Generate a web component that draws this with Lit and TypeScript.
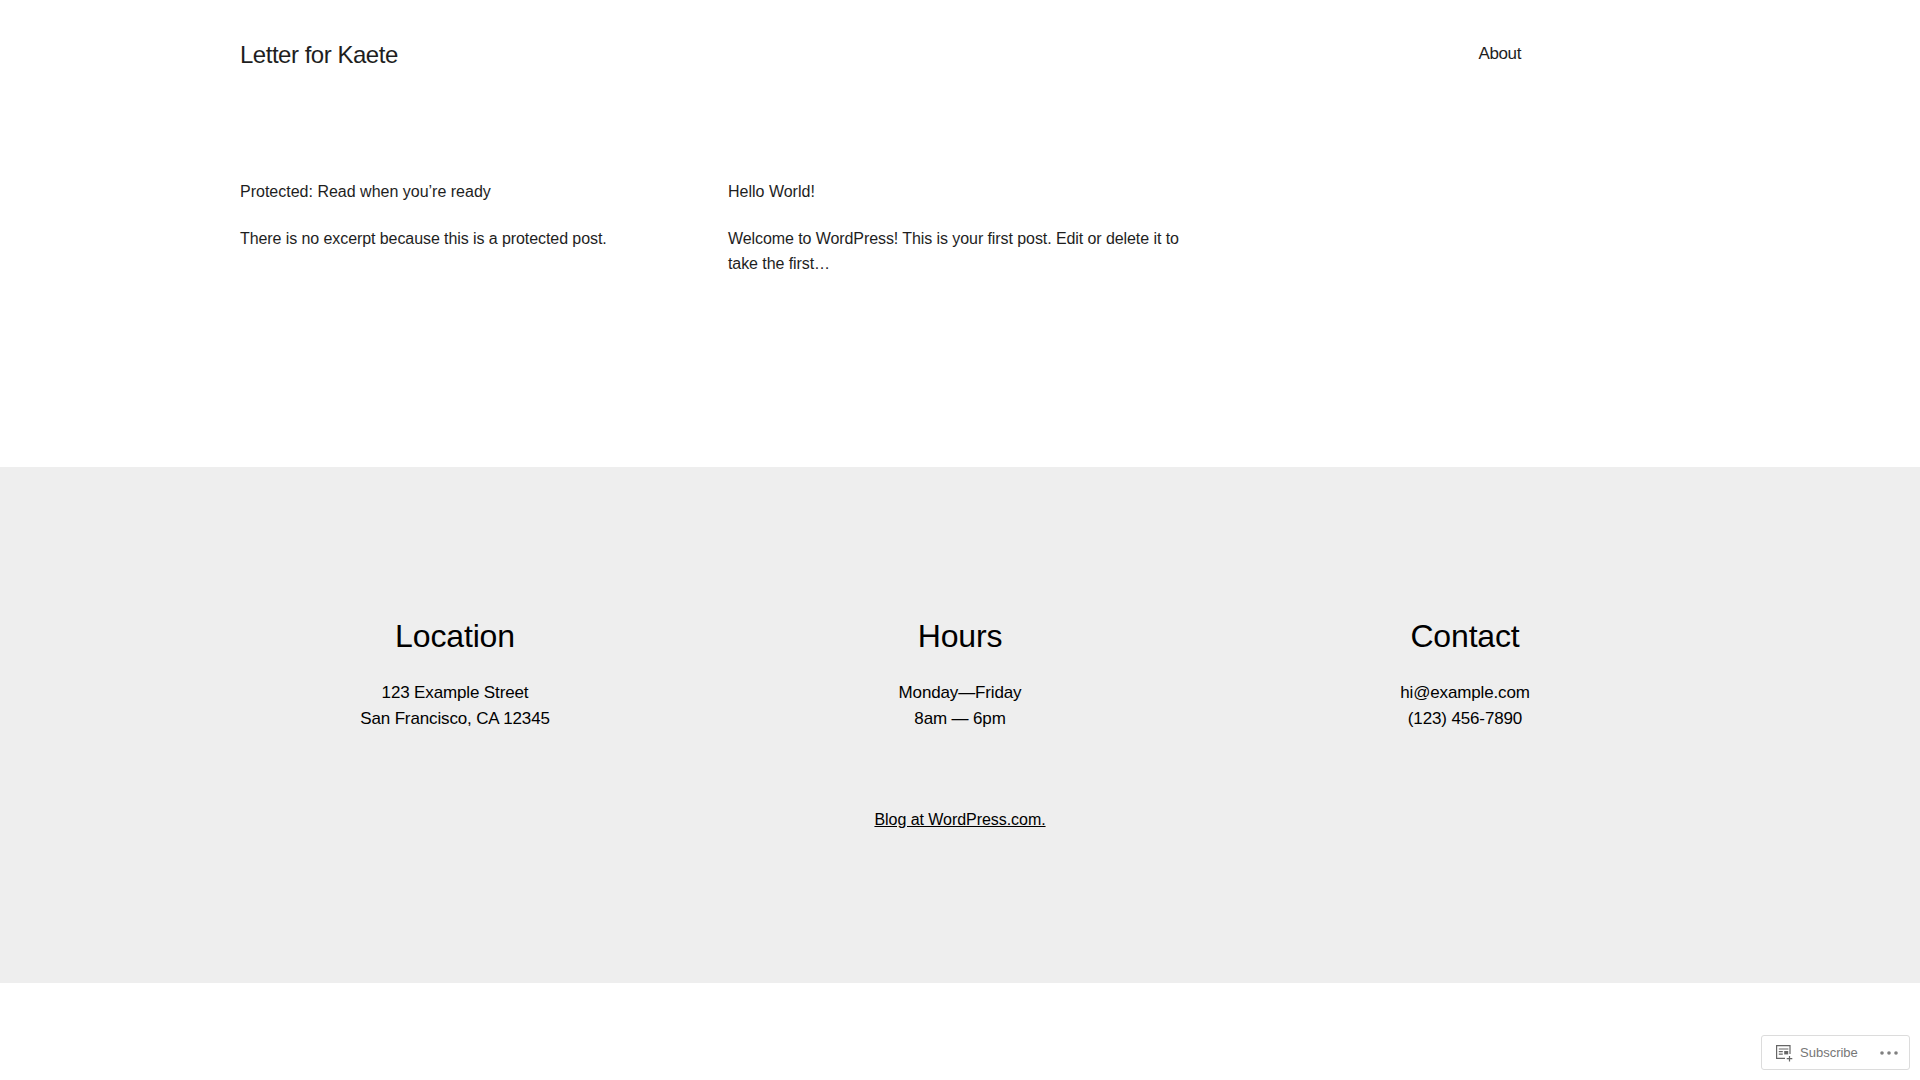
import { LitElement, html, css } from "lit";
import { customElement } from "lit/decorators.js";

const columns = [
  { title: "Location", lines: ["123 Example Street", "San Francisco, CA 12345"] },
  { title: "Hours", lines: ["Monday—Friday", "8am — 6pm"] },
  { title: "Contact", lines: ["hi@example.com", "(123) 456-7890"] },
];
const posts = [
  { title: "Protected: Read when you’re ready", text: "There is no excerpt because this is a protected post." },
  { title: "Hello World!", text: "Welcome to WordPress! This is your first post. Edit or delete it to take the first…" },
];

@customElement("app-root")
export class AppRoot extends LitElement {
  static styles = css`
    :host { display: block; height: 1080px; overflow: hidden; position: relative; background: #fff; color: #1e1e1e; font-family: "Liberation Sans", Arial, sans-serif; }
    a { color: inherit; text-decoration: none; }
    .header { display: flex; justify-content: space-between; align-items: center; height: 108px; padding: 0 399px 0 240px; }
    .site-title { font-size: 24px; line-height: 36px; letter-spacing: -0.48px; margin-top: 2px; }
    .nav { font-size: 17px; line-height: 26px; letter-spacing: -0.4px; }
    .posts { display: grid; grid-template-columns: repeat(3, 464px); gap: 24px; padding: 71px 240px 0; height: 288px; box-sizing: content-box; font-size: 16px; line-height: 25px; }
    .post-title { margin: 0; font: inherit; }
    .post-text { margin: 22px 0 0; letter-spacing: -0.08px; }
    .footer { background: #eee; height: 516px; color: #000; padding-top: 146px; box-sizing: border-box; font-size: 17px; letter-spacing: -0.14px; }
    .cols { display: grid; grid-template-columns: repeat(3, 430px); gap: 75px; padding: 0 240px; text-align: center; }
    .cols h2 { margin: 0; font-size: 32px; font-weight: 400; line-height: 46px; letter-spacing: -0.15px; }
    .cols p { margin: 21px 0 0; line-height: 26px; }
    .credit { text-align: center; margin-top: 75px; line-height: 26px; font-size: 16px; letter-spacing: -0.05px; }
    .credit a { text-decoration: underline; }
    .sub { position: absolute; right: 10px; bottom: 10px; width: 149px; height: 35px; box-sizing: border-box; background: #fff; border: 1px solid #dcdcdc; border-radius: 3px; display: flex; align-items: center; padding: 0 0 0 13px; color: #777; font-size: 13px; }
    .sub svg { display: block; }
    .sub .label { margin-left: 7px; }
    .dots { margin-left: auto; margin-right: 10px; }
  `;

  render() {
    return html`
      <header class="header">
        <a class="site-title" href="#">Letter for Kaete</a>
        <a class="nav" href="#">About</a>
      </header>
      <main class="posts">
        ${posts.map((p) => html`<article><h3 class="post-title">${p.title}</h3><p class="post-text">${p.text}</p></article>`)}
      </main>
      <footer class="footer">
        <div class="cols">
          ${columns.map((c) => html`<div><h2>${c.title}</h2><p>${c.lines[0]}<br />${c.lines[1]}</p></div>`)}
        </div>
        <div class="credit"><a href="#">Blog at WordPress.com.</a></div>
      </footer>
      <div class="sub">
        <svg width="18" height="18" viewBox="0 0 18 18" fill="none" stroke="#666" stroke-width="1.2">
          <path d="M15 10V1.6H1.6v12.8h8.4" />
          <path d="M3.8 5h9.6M3.8 7.6h4M3.8 10.2h4" />
          <rect x="9.2" y="7" width="4" height="3.4" fill="#666" stroke="none" />
          <path d="M14.5 12v5.5M11.7 14.7h5.6" />
        </svg>
        <span class="label">Subscribe</span>
        <svg class="dots" width="20" height="6" viewBox="0 0 20 6" fill="#808080"><circle cx="3" cy="3" r="1.8" /><circle cx="10" cy="3" r="1.8" /><circle cx="17" cy="3" r="1.8" /></svg>
      </div>
    `;
  }
}
